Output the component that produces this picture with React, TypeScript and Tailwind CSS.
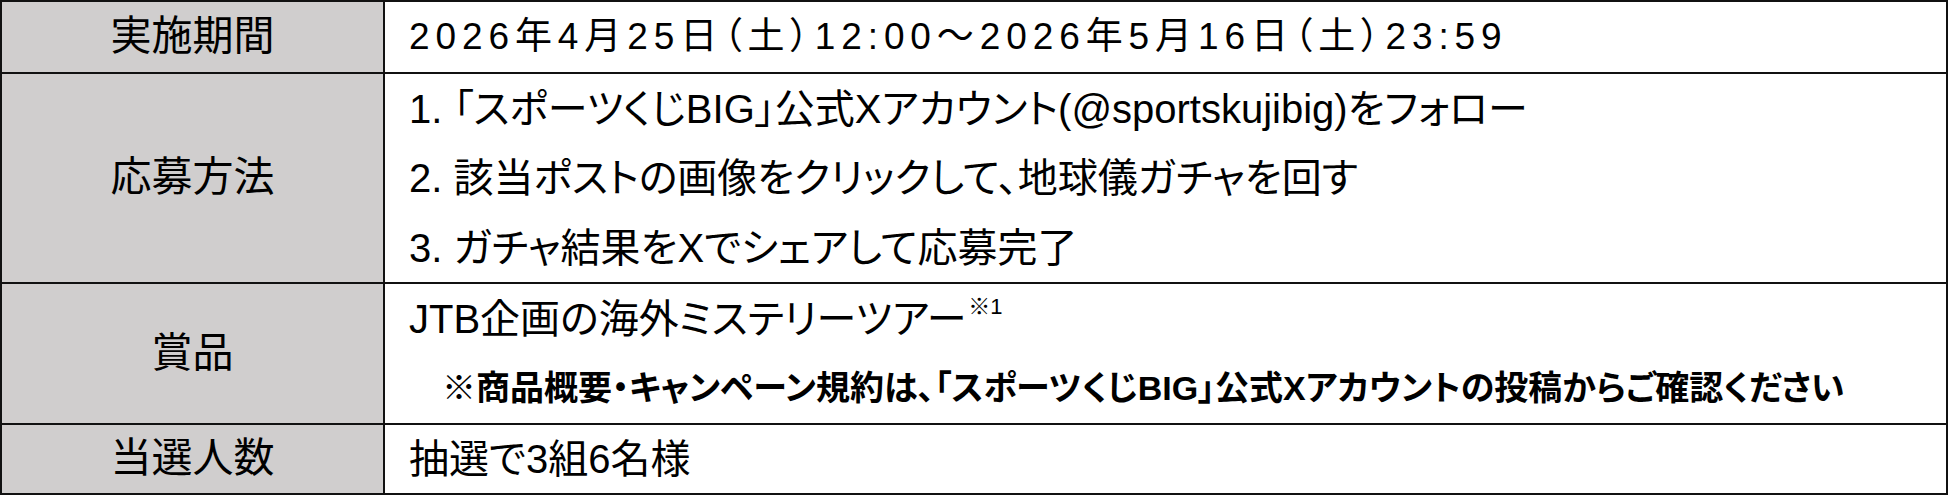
const font = { fontFamily: '"Liberation Sans", "Noto Sans CJK JP", sans-serif' };

function Label({ children }: { children: React.ReactNode }) {
  return (
    <div className="flex items-center justify-center border-r-2 border-[#111] bg-[#d0cece] text-[41px] text-black">
      {children}
    </div>
  );
}

function Line({ children, className = '' }: { children: React.ReactNode; className?: string }) {
  return <div className={`flex items-center whitespace-nowrap ${className}`}>{children}</div>;
}

export default function App() {
  return (
    <div className="h-[498px] w-[1950px] bg-white" style={font}>
      <div className="grid w-[1948px] grid-cols-[383px_1fr] border-2 border-[#111] text-black">
        <Label>実施期間</Label>
        <div className="px-[24px] text-[37px] tracking-[5.9px] [font-feature-settings:'palt']">
          <Line className="h-[70px]">2026年4月25日（土）12:00～2026年5月16日（土）23:59</Line>
        </div>

        <div className="col-span-2 border-t-2 border-[#111]" />
        <Label>応募方法</Label>
        <div className="px-[24px] text-[40px] [font-feature-settings:'palt']">
          <Line className="h-[69px]">1. 「スポーツくじBIG」公式Xアカウント(@sportskujibig)をフォロー</Line>
          <Line className="h-[70px]">2. 該当ポストの画像をクリックして、地球儀ガチャを回す</Line>
          <Line className="h-[69px]">3. ガチャ結果をXでシェアして応募完了</Line>
        </div>

        <div className="col-span-2 border-t-2 border-[#111]" />
        <Label>賞品</Label>
        <div className="px-[24px] text-[40px] [font-feature-settings:'palt']">
          <Line className="h-[70px]">
            JTB企画の海外ミステリーツアー
            <span className="ml-[2px] self-start pt-[12px] text-[22px] leading-none">※1</span>
          </Line>
          <Line className="h-[69px] pl-[33px] text-[34px] font-bold">
            ※商品概要・キャンペーン規約は、「スポーツくじBIG」公式Xアカウントの投稿からご確認ください
          </Line>
        </div>

        <div className="col-span-2 border-t-2 border-[#111]" />
        <Label>当選人数</Label>
        <div className="px-[24px] text-[40px] [font-feature-settings:'palt']">
          <Line className="h-[68px]">抽選で3組6名様</Line>
        </div>
      </div>
    </div>
  );
}
